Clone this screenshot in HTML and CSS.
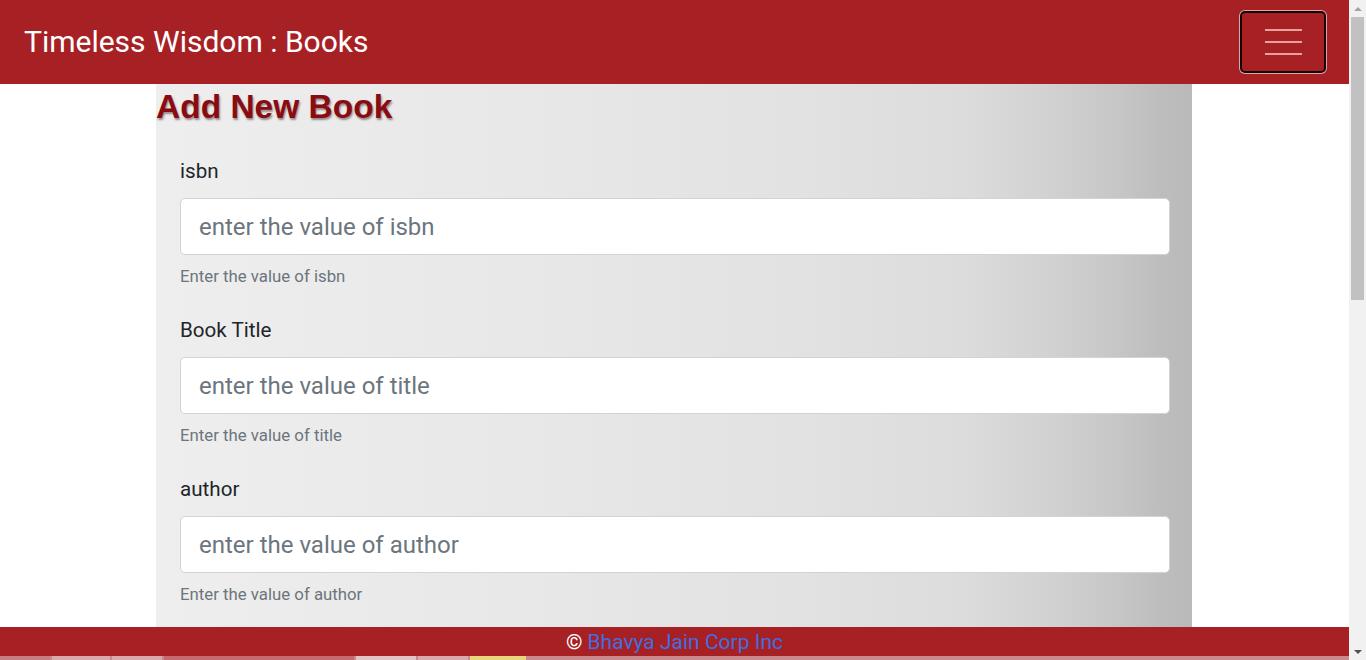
FILE: index.html
```html
<!DOCTYPE html>
<html lang="en">
<head>
<meta charset="utf-8">
<title>Timeless Wisdom : Books</title>
<link rel="stylesheet" href="styles.css">
</head>
<body>
<div class="window">
  <div class="page">
    <header class="navbar">
      <span class="brand">Timeless Wisdom : Books</span>
      <button class="toggler" type="button" aria-label="Toggle navigation">
        <span class="bar"></span><span class="bar"></span><span class="bar"></span>
      </button>
    </header>
    <main class="main">
      <section class="card">
        <h2 class="heading">Add New Book</h2>
        <form class="form">
          <div class="group">
            <label class="label" for="isbn">isbn</label>
            <input class="input" id="isbn" type="text" placeholder="enter the value of isbn">
            <small class="help">Enter the value of isbn</small>
          </div>
          <div class="group">
            <label class="label" for="title">Book Title</label>
            <input class="input" id="title" type="text" placeholder="enter the value of title">
            <small class="help">Enter the value of title</small>
          </div>
          <div class="group">
            <label class="label" for="author">author</label>
            <input class="input" id="author" type="text" placeholder="enter the value of author">
            <small class="help">Enter the value of author</small>
          </div>
        </form>
      </section>
    </main>
    <footer class="footer">
      <span class="copy">©</span> <a class="link" href="#">Bhavya Jain Corp Inc</a>
    </footer>
    <div class="strip">
      <span class="tab t1"></span><span class="tab t2"></span><span class="tab t3"></span><span class="tab t4"></span><span class="tab t5"></span><span class="tab t6"></span><span class="tab t7"></span>
    </div>
  </div>
  <div class="scrollbar">
    <div class="arrow up"></div>
    <div class="track"><div class="thumb"></div></div>
    <div class="arrow down"></div>
  </div>
</div>
</body>
</html>
```

FILE: styles.css
```css
* { box-sizing: border-box; }
html, body { margin: 0; padding: 0; height: 100%; overflow: hidden; }
body { font-family: Roboto, "Liberation Sans", Arial, sans-serif; color: #212529; background: #fff; }

.window { display: flex; width: 1366px; height: 660px; }
.page { flex: 1; display: flex; flex-direction: column; min-width: 0; }

.navbar {
  height: 84px; flex: none;
  background: #a72124;
  display: flex; align-items: center; justify-content: space-between;
  padding: 0 23px 0 24px;
}
.brand { color: #fff; font-size: 30px; line-height: 40px; font-weight: 400; }
.toggler {
  width: 86px; height: 62px;
  background: #a72124;
  border: 2px solid #120606;
  border-radius: 5px;
  box-shadow: 0 0 0 1px rgba(255,255,255,0.6);
  display: flex; flex-direction: column; align-items: center; justify-content: center; gap: 10px;
  padding: 0;
}
.bar { display: block; width: 37px; height: 2px; background: #e7a1a1; }

.main { flex: 1; overflow: hidden; display: flex; padding-left: 156px; background: #fff; }
.card {
  width: 1036px;
  background:
    linear-gradient(to right, #eeeeee 0%, #e8e8e8 35%, #e2e2e2 62%, #dcdcdc 78%, #d2d2d2 86%, #c6c6c6 93%, #bdbdbd 97%, #b9b9b9 100%);
}
.heading {
  margin: 0;
  font-family: "Liberation Sans", Arial, sans-serif;
  font-weight: 700; font-size: 33.5px; line-height: 46px;
  color: #880c12;
  text-shadow: 1px 2px 2px rgba(70,40,40,0.5);
}
.form { padding: 26px 22px 0 24px; }
.group { display: flex; flex-direction: column; margin-bottom: 27px; }
.label { font-size: 20.6px; line-height: 30px; margin-bottom: 12px; color: #212529; }
.input {
  height: 57px; width: 100%;
  border: 1px solid #ced4da; border-radius: 5px;
  background: #fff;
  padding: 0 18px;
  font-family: Roboto, sans-serif; font-size: 24px; color: #495057;
  outline: none;
}
.input::placeholder { color: #6c757d; opacity: 1; }
.help { font-size: 16.8px; line-height: 24px; margin-top: 9px; color: #6c757d; }

.footer {
  height: 29px; flex: none;
  background: #a72124;
  display: flex; align-items: center; justify-content: center; gap: 5px;
  font-size: 21px; line-height: 29px;
  padding-top: 2px;
}
.copy { color: #fff; }
.link { color: #3f6ee0; text-decoration: none; }

.strip {
  height: 4px; flex: none;
  display: flex; gap: 2px;
  background: #c98a8d;
}
.tab { display: block; height: 4px; background: #d9a9ab; }
.t1 { width: 50px; background: #c77e82; }
.t2 { width: 58px; }
.t3 { width: 50px; }
.t4 { width: 190px; background: #c46a70; }
.t5 { width: 60px; background: #e3c4c5; }
.t6 { width: 50px; }
.t7 { width: 56px; background: #e8d57c; }

.scrollbar { width: 17px; flex: none; display: flex; flex-direction: column; background: #f1f1f1; }
.arrow { height: 17px; flex: none; display: flex; align-items: center; justify-content: center; }
.arrow.up::before { content: ""; border-left: 4px solid transparent; border-right: 4px solid transparent; border-bottom: 4px solid #a3a3a3; }
.arrow.down::before { content: ""; border-left: 4px solid transparent; border-right: 4px solid transparent; border-top: 4px solid #505050; }
.track { flex: 1; padding: 0 2px; }
.thumb { height: 283px; background: #c1c1c1; }
```
